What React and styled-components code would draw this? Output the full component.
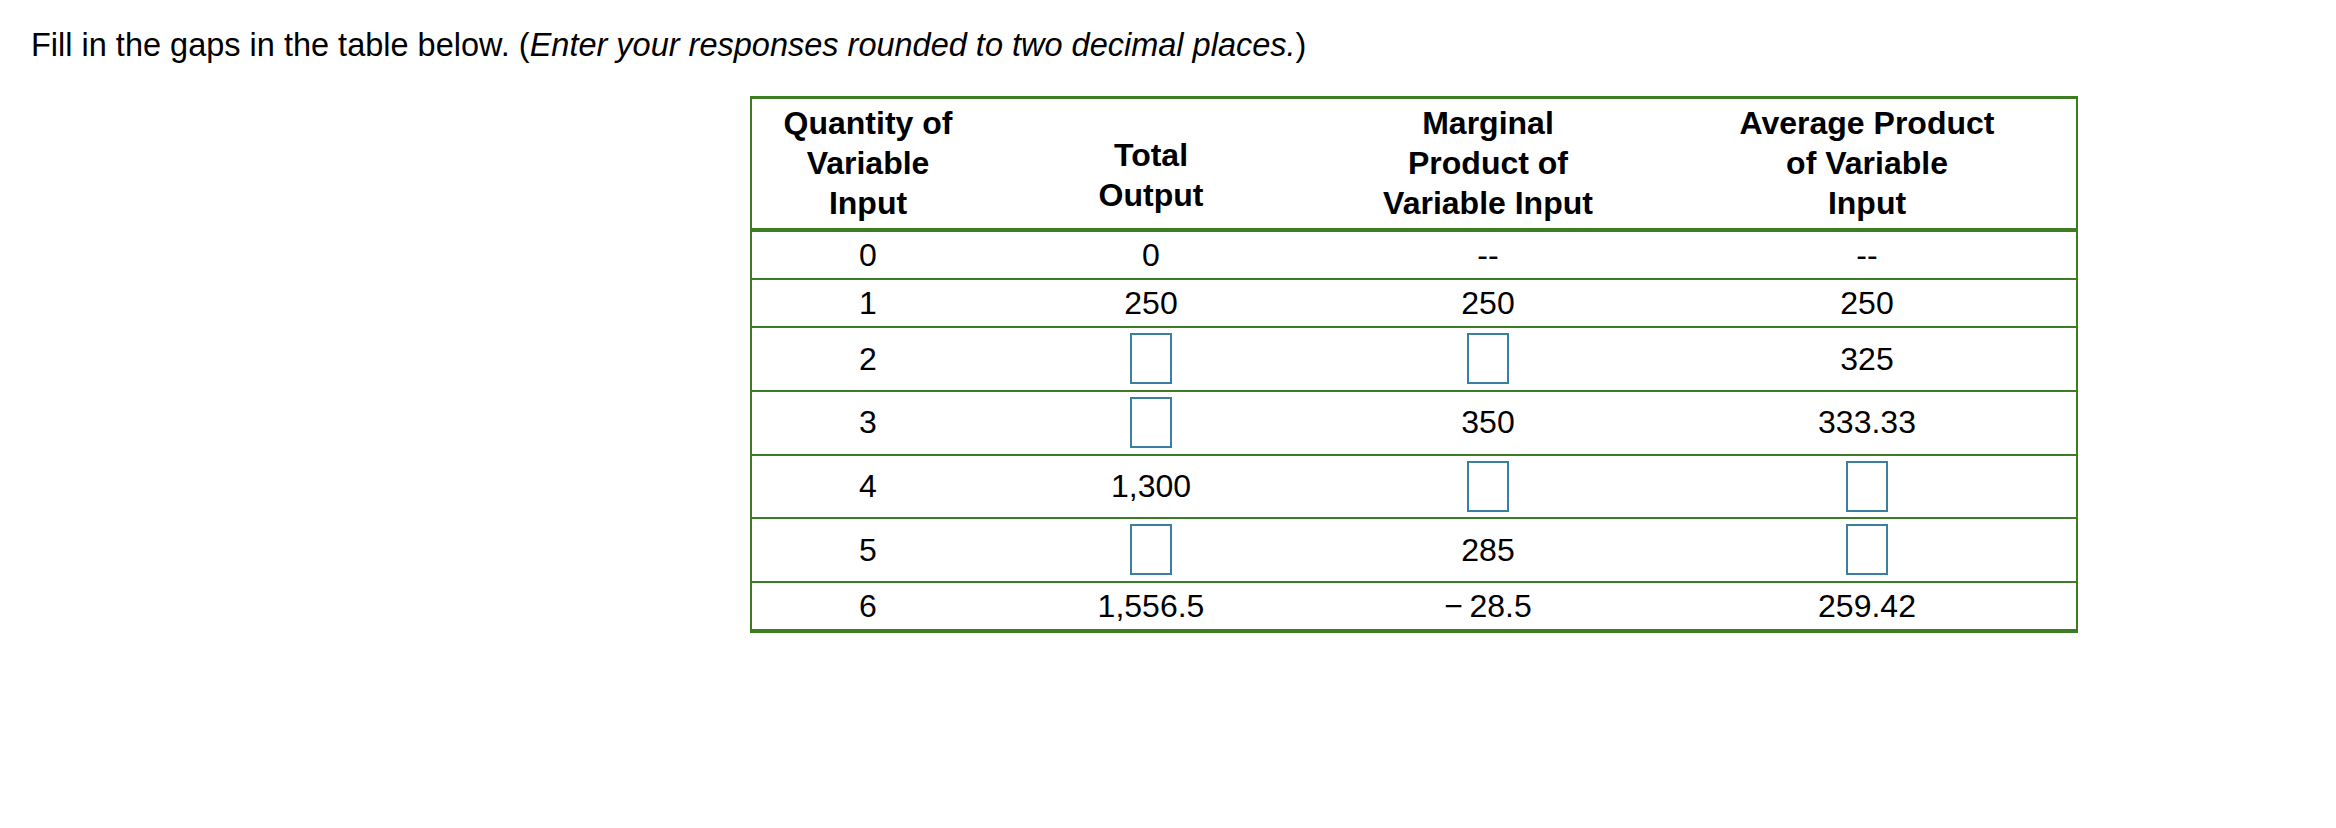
import React from 'react';
import styled, { createGlobalStyle } from 'styled-components';

const GREEN = '#3c7d23';
const BLUE = '#3a7ea0';

const Global = createGlobalStyle`
  html, body { margin: 0; padding: 0; background: #fff; }
  body { font-family: "Liberation Sans", Arial, Helvetica, sans-serif; color: #000; }
`;

const Page = styled.main`
  box-sizing: border-box;
  width: 2336px;
  height: 828px;
  display: flex;
  flex-direction: column;
  align-items: flex-start;
  gap: 31px;
  padding: 25px 0 0 31px;
`;

const Prompt = styled.p`
  margin: 0;
  font-size: 32.5px;
  line-height: 40px;
`;

const Note = styled.em`
  font-style: italic;
`;

const Table = styled.table`
  margin-left: 719px;
  width: 1328px;
  table-layout: fixed;
  border-collapse: separate;
  border-spacing: 0;
  border-style: solid;
  border-color: ${GREEN};
  border-width: 3px 2px 4px 2px;
  font-size: 32px;
  line-height: 40px;
`;

const HeadCell = styled.th`
  font-weight: bold;
  text-align: center;
  vertical-align: ${(p) => (p.$drop ? 'top' : 'middle')};
  padding: ${(p) => (p.$drop ? '36px 8px 5px' : '4px 8px 5px')};
  border-bottom: 4px solid ${GREEN};
`;

const Cell = styled.td`
  text-align: center;
  vertical-align: middle;
  padding: ${(p) => (p.$tall ? '5px 8px 5.75px' : '3px 8px')};
  border-bottom: ${(p) => (p.$last ? 'none' : `2px solid ${GREEN}`)};
`;

const Blank = styled.input`
  display: block;
  box-sizing: border-box;
  width: 42px;
  height: 51px;
  margin: 0 auto;
  padding: 0;
  border: 2px solid ${BLUE};
  border-radius: 0;
  background: #fff;
  font: inherit;
  outline: none;
`;

const columns = [
  { width: 232, label: ['Quantity of', 'Variable', 'Input'] },
  { width: 334, label: ['Total', 'Output'], drop: true },
  { width: 340, label: ['Marginal', 'Product of', 'Variable Input'] },
  { width: 418, label: ['Average Product', 'of Variable', 'Input'] },
];

const rows = [
  ['0', '0', '--', '--'],
  ['1', '250', '250', '250'],
  ['2', null, null, '325'],
  ['3', null, '350', '333.33'],
  ['4', '1,300', null, null],
  ['5', null, '285', null],
  ['6', '1,556.5', '\u2212\u200928.5', '259.42'],
];

export default function App() {
  return (
    <>
      <Global />
      <Page>
        <Prompt>
          Fill in the gaps in the table below. (
          <Note>Enter your responses rounded to two decimal places.</Note>)
        </Prompt>
        <Table>
          <colgroup>
            {columns.map((c, i) => (
              <col key={i} style={{ width: c.width }} />
            ))}
          </colgroup>
          <thead>
            <tr>
              {columns.map((c, i) => (
                <HeadCell key={i} $drop={c.drop}>
                  {c.label.map((line, j) => (
                    <React.Fragment key={j}>
                      {j > 0 && <br />}
                      {line}
                    </React.Fragment>
                  ))}
                </HeadCell>
              ))}
            </tr>
          </thead>
          <tbody>
            {rows.map((r, i) => {
              const tall = r.some((v) => v === null);
              const last = i === rows.length - 1;
              return (
                <tr key={i}>
                  {r.map((v, j) => (
                    <Cell key={j} $tall={tall} $last={last}>
                      {v === null ? <Blank type="text" aria-label={`answer row ${i} column ${j}`} /> : v}
                    </Cell>
                  ))}
                </tr>
              );
            })}
          </tbody>
        </Table>
      </Page>
    </>
  );
}
